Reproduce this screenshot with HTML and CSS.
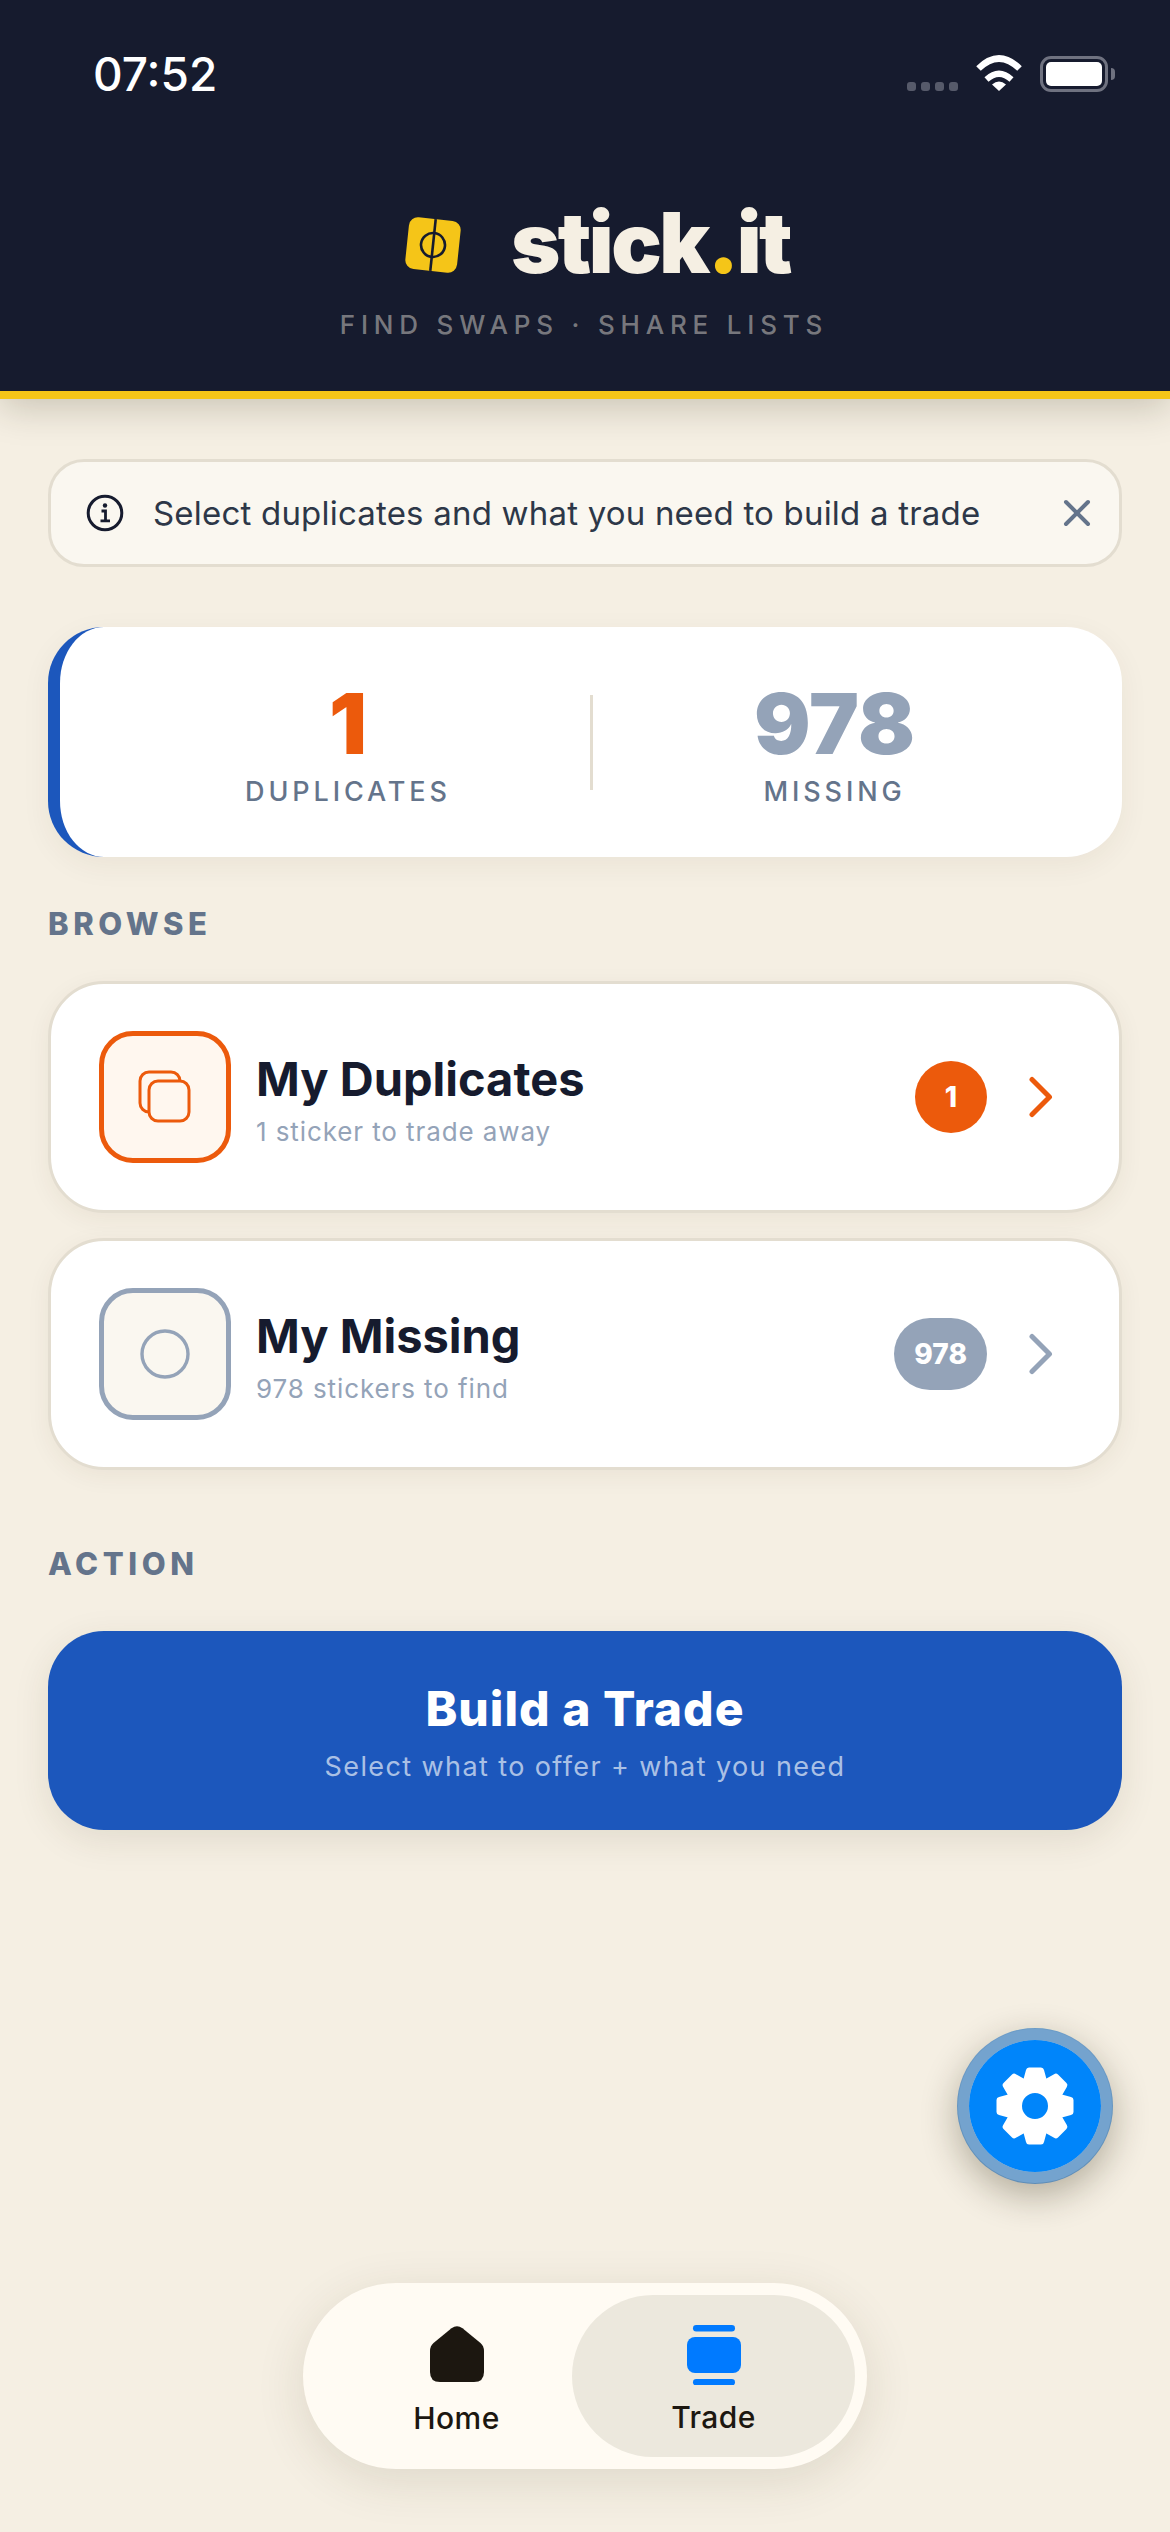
FILE: index.html
```html
<!DOCTYPE html>
<html lang="en">

<head>
    <meta charset="UTF-8">
    <meta name="viewport" content="width=device-width, initial-scale=1.0">
    <title>stick.it</title>
    <link rel="stylesheet" href="styles.css">
</head>

<body>
    <div class="app">
        <header class="header">
            <div class="status">
                <span class="time">07:52</span>
                <div class="status-icons">
                    <div class="signal"><i></i><i></i><i></i><i></i></div>
                    <svg class="wifi" width="48" height="36" viewBox="0 0 48 36">
                        <path d="M3.5 13.5Q24 -6.5 44.5 13.5" fill="none" stroke="#fff" stroke-width="6.5"/>
                        <path d="M11.5 24.5Q24 13 36.5 24.5" fill="none" stroke="#fff" stroke-width="6"/>
                        <path d="M17 29.5Q24 23.5 31 29.5L24 36Z" fill="#fff"/>
                    </svg>
                    <div class="battery"><div class="battery-fill"></div></div>
                    <div class="battery-cap"></div>
                </div>
            </div>
            <div class="logo">
                <svg class="logo-icon" width="58" height="58" viewBox="0 0 58 58">
                    <g transform="rotate(6 29 29)">
                        <rect x="3" y="3" width="52" height="52" rx="9" fill="#f5c518"/>
                        <circle cx="29" cy="29" r="12" fill="none" stroke="#161b2e" stroke-width="2.6"/>
                        <path d="M29 3V55" stroke="#161b2e" stroke-width="2.6"/>
                    </g>
                </svg>
                <span class="logo-text">stick<span class="logo-dot">.</span>it</span>
            </div>
            <p class="tagline">FIND SWAPS · SHARE LISTS</p>
        </header>

        <main class="content">
            <div class="banner">
                <svg width="38" height="38" viewBox="0 0 38 38">
                    <circle cx="19" cy="19" r="16.8" fill="none" stroke="#161b2e" stroke-width="3"/>
                    <circle cx="19" cy="11.5" r="2.2" fill="#161b2e"/>
                    <path d="M15.5 17H19.5V26.5M14.5 26.8H24" fill="none" stroke="#161b2e" stroke-width="2.8"/>
                </svg>
                <span class="banner-text">Select duplicates and what you need to build a trade</span>
                <svg class="banner-close" width="28" height="28" viewBox="0 0 28 28">
                    <path d="M3 3L25 25M25 3L3 25" stroke="#64748b" stroke-width="4" stroke-linecap="round"/>
                </svg>
            </div>

            <section class="stats">
                <div class="stat">
                    <span class="stat-num orange">1</span>
                    <span class="stat-label">DUPLICATES</span>
                </div>
                <div class="stat-divider"></div>
                <div class="stat">
                    <span class="stat-num grey">978</span>
                    <span class="stat-label">MISSING</span>
                </div>
            </section>

            <h2 class="section-title browse">BROWSE</h2>

            <div class="card">
                <div class="card-icon orange-box">
                    <svg width="54" height="54" viewBox="0 0 54 54" fill="none">
                        <rect x="2" y="2" width="40" height="40" rx="9" stroke="#ec5a0c" stroke-width="3"/>
                        <rect x="11" y="11" width="40" height="40" rx="9" fill="#fff7ef" stroke="#ec5a0c" stroke-width="3"/>
                    </svg>
                </div>
                <div class="card-body">
                    <h3 class="card-title">My Duplicates</h3>
                    <p class="card-sub">1 sticker to trade away</p>
                </div>
                <span class="badge orange-bg">1</span>
                <svg class="chevron" width="24" height="42" viewBox="0 0 24 42">
                    <path d="M3 3.5L20.5 21L3 38.5" fill="none" stroke="#ec5a0c" stroke-width="5" stroke-linecap="round" stroke-linejoin="round"/>
                </svg>
            </div>

            <div class="card second">
                <div class="card-icon grey-box">
                    <svg width="50" height="50" viewBox="0 0 50 50">
                        <circle cx="25" cy="25" r="23" fill="none" stroke="#94a3b8" stroke-width="3.4"/>
                    </svg>
                </div>
                <div class="card-body">
                    <h3 class="card-title">My Missing</h3>
                    <p class="card-sub">978 stickers to find</p>
                </div>
                <span class="badge grey-bg">978</span>
                <svg class="chevron" width="24" height="42" viewBox="0 0 24 42">
                    <path d="M3 3.5L20.5 21L3 38.5" fill="none" stroke="#94a3b8" stroke-width="5" stroke-linecap="round" stroke-linejoin="round"/>
                </svg>
            </div>

            <h2 class="section-title action">ACTION</h2>

            <div class="trade-btn">
                <span class="trade-title">Build a Trade</span>
                <span class="trade-sub">Select what to offer + what you need</span>
            </div>
        </main>

        <div class="fab">
            <svg width="80" height="80" viewBox="-40 -40 80 80">
                <circle r="20.5" fill="none" stroke="#fff" stroke-width="15"/>
                <g fill="#fff">
                    <path id="tooth" d="M-6 -38.5H6Q8.5 -38.5 9 -36L12 -25H-12L-9 -36Q-8.5 -38.5 -6 -38.5Z"/>
                    <use href="#tooth" transform="rotate(45)"/>
                    <use href="#tooth" transform="rotate(90)"/>
                    <use href="#tooth" transform="rotate(135)"/>
                    <use href="#tooth" transform="rotate(180)"/>
                    <use href="#tooth" transform="rotate(225)"/>
                    <use href="#tooth" transform="rotate(270)"/>
                    <use href="#tooth" transform="rotate(315)"/>
                </g>
            </svg>
        </div>

        <nav class="tabbar">
            <div class="tab home">
                <svg width="54" height="56" viewBox="0 0 54 56">
                    <path d="M21.5 2.2Q27 -1.5 32.5 2.2L50.5 17Q54 20 54 25V46Q54 56 44 56H10Q0 56 0 46V25Q0 20 3.5 17Z" fill="#1c1710"/>
                </svg>
                <span class="tab-label">Home</span>
            </div>
            <div class="tab trade">
                <svg width="54" height="60" viewBox="0 0 54 60" fill="#007aff">
                    <rect x="6" y="0" width="42" height="6.5" rx="3.2"/>
                    <rect x="0" y="12" width="54" height="36" rx="8"/>
                    <rect x="6" y="54" width="42" height="6.5" rx="3.2"/>
                </svg>
                <span class="tab-label">Trade</span>
            </div>
        </nav>
    </div>
</body>

</html>
```

FILE: styles.css
```css
* {
    box-sizing: border-box;
}

body {
    margin: 0;
    background-color: #f5efe3;
    font-family: Inter, "Liberation Sans", sans-serif;
}

.app {
    position: relative;
    height: 2532px;
    overflow: hidden;
}

/* Header */
.header {
    height: 399px;
    padding-top: 48px;
    background-color: #161b2e;
    border-bottom: 8px solid #f5c518;
    box-shadow: 0 8px 36px rgba(40, 35, 10, 0.22);
}

.status {
    display: flex;
    justify-content: space-between;
    align-items: flex-start;
    padding: 0 55px 0 93px;
}

.time {
    color: #fff;
    font-size: 46px;
    font-weight: 500;
    line-height: 52px;
}

.status-icons {
    display: flex;
    align-items: flex-start;
    padding-top: 7px;
}

.signal {
    display: flex;
    gap: 5px;
    margin-top: 27px;
    margin-right: 17px;
}

.signal i {
    width: 9px;
    height: 9px;
    border-radius: 3px;
    background-color: #565a6a;
}

.battery {
    width: 68px;
    height: 36px;
    margin-top: 1px;
    margin-left: 17px;
    padding: 3px;
    border: 3px solid #6f7280;
    border-radius: 11px;
}

.battery-fill {
    height: 100%;
    background-color: #fff;
    border-radius: 5px;
}

.battery-cap {
    width: 4px;
    height: 12px;
    margin: 13px 0 0 3px;
    background-color: #6f7280;
    border-radius: 0 6px 6px 0;
}

.logo {
    display: flex;
    justify-content: center;
    align-items: center;
    margin-top: 93px;
    padding-left: 24px;
}

.logo-icon {
    margin-right: 49px;
    margin-top: 4px;
}

.logo-text {
    color: #f5efe3;
    font-size: 84px;
    font-weight: 900;
    line-height: 100px;
    letter-spacing: -2.5px;
}

.logo-dot {
    color: #f5c518;
}

.tagline {
    margin: 16px 0 0;
    padding-right: 2px;
    color: rgba(245, 239, 227, 0.45);
    font-size: 26px;
    font-weight: 500;
    line-height: 32px;
    letter-spacing: 5.8px;
    text-align: center;
}

/* Content */
.content {
    padding: 60px 48px 0;
}

.banner {
    display: flex;
    align-items: center;
    height: 108px;
    padding: 0 28px 0 35px;
    background-color: #faf7f0;
    border: 3px solid #e3ddd0;
    border-radius: 36px;
}

.banner-text {
    flex: 1;
    margin-left: 29px;
    color: #2d3748;
    font-size: 33px;
    letter-spacing: 0.2px;
}

.stats {
    display: flex;
    align-items: center;
    height: 230px;
    margin-top: 60px;
    background-color: #fff;
    border-left: 12px solid #1c57bc;
    border-radius: 56px;
    box-shadow: 0 8px 30px rgba(60, 50, 20, 0.06);
}

.stat {
    display: flex;
    flex-direction: column;
    align-items: center;
}

.stat:first-child {
    width: 530px;
    padding-left: 46px;
}

.stat:last-child {
    flex: 1;
    padding-right: 46px;
}

.stat-num {
    font-size: 84px;
    font-weight: 900;
    line-height: 96px;
}

.orange {
    color: #ec5a0c;
}

.grey {
    color: #94a3b8;
}

.stat-label {
    margin-top: 4px;
    color: #64748b;
    font-size: 27px;
    font-weight: 500;
    line-height: 32px;
    letter-spacing: 3.9px;
}

.stat-divider {
    width: 3px;
    height: 95px;
    background-color: #e3ddd0;
}

.section-title {
    margin: 0;
    color: #64748b;
    font-size: 31px;
    font-weight: 800;
    line-height: 34px;
    letter-spacing: 4.6px;
}

.browse {
    margin-top: 50px;
    margin-bottom: 40px;
}

.action {
    margin-top: 77px;
    margin-bottom: 50px;
}

.card {
    display: flex;
    align-items: center;
    height: 232px;
    padding: 0 66px 0 48px;
    background-color: #fff;
    border: 3px solid #e3ddd0;
    border-radius: 56px;
    box-shadow: 0 6px 24px rgba(60, 50, 20, 0.06);
}

.second {
    margin-top: 25px;
}

.card-icon {
    display: flex;
    justify-content: center;
    align-items: center;
    width: 132px;
    height: 132px;
    border-radius: 34px;
}

.orange-box {
    background-color: #fff7ef;
    border: 5px solid #ec5a0c;
}

.grey-box {
    background-color: #faf7f0;
    border: 5px solid #94a3b8;
}

.card-body {
    flex: 1;
    margin-top: 5px;
    margin-left: 25px;
}

.card-title {
    margin: 0;
    color: #161b2e;
    font-size: 47px;
    font-weight: 700;
    line-height: 56px;
}

.card-sub {
    margin: 8px 0 0;
    color: #94a3b8;
    font-size: 26px;
    line-height: 34px;
    letter-spacing: 0.9px;
}

.badge {
    min-width: 72px;
    height: 72px;
    padding: 0 20px;
    border-radius: 36px;
    color: #fff;
    font-size: 28px;
    font-weight: 800;
    line-height: 72px;
    text-align: center;
}

.orange-bg {
    background-color: #ec5a0c;
}

.grey-bg {
    background-color: #94a3b8;
}

.chevron {
    margin-left: 42px;
}

.trade-btn {
    display: flex;
    flex-direction: column;
    align-items: center;
    justify-content: center;
    height: 199px;
    padding-top: 4px;
    background-color: #1c57bc;
    border-radius: 56px;
    box-shadow: 0 10px 36px rgba(60, 50, 20, 0.1);
}

.trade-title {
    color: #fff;
    font-size: 48px;
    font-weight: 800;
    line-height: 56px;
    letter-spacing: 1px;
}

.trade-sub {
    margin-top: 13px;
    color: rgba(255, 255, 255, 0.65);
    font-size: 27px;
    line-height: 34px;
    letter-spacing: 1.4px;
}

/* Floating bits */
.fab {
    position: absolute;
    left: 957px;
    top: 2028px;
    display: flex;
    justify-content: center;
    align-items: center;
    width: 156px;
    height: 156px;
    background-color: #0085fa;
    background-clip: padding-box;
    border: 12px solid rgba(10, 100, 190, 0.55);
    border-radius: 50%;
    box-shadow: 0 12px 36px rgba(40, 35, 10, 0.32);
}

.tabbar {
    position: absolute;
    left: 303px;
    top: 2283px;
    display: flex;
    width: 564px;
    height: 186px;
    padding: 12px 12px 12px 38px;
    background-color: #fffbf3;
    border-radius: 93px;
    box-shadow: 0 12px 50px rgba(60, 50, 20, 0.12);
}

.tab {
    display: flex;
    flex-direction: column;
    align-items: center;
}

.home {
    width: 231px;
    padding-top: 31px;
}

.trade {
    width: 283px;
    padding-top: 30px;
    background-color: #ece8dd;
    border-radius: 81px;
}

.tab-label {
    margin-top: 18px;
    color: #1c1710;
    font-size: 30px;
    font-weight: 500;
    line-height: 36px;
    letter-spacing: 0.4px;
}

.trade .tab-label {
    margin-top: 14px;
}
```
